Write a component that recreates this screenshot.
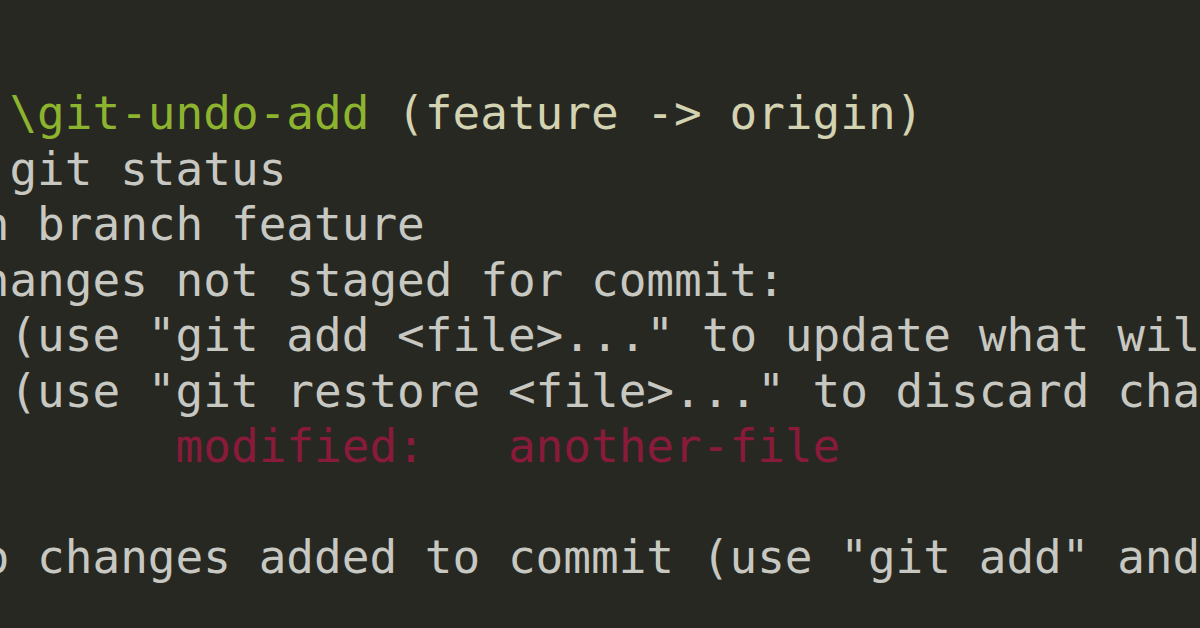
import React from 'react';

interface Segment {
  text: string;
  color: string;
}

const lines: Segment[][] = [
  [
    { text: '  \\git-undo-add', color: 'text-[#8db42e]' },
    { text: ' (feature -> origin)', color: 'text-[#d3d3b2]' }
  ],
  [{ text: 'λ git status', color: 'text-[#c8c8c2]' }],
  [{ text: 'On branch feature', color: 'text-[#c8c8c2]' }],
  [{ text: 'Changes not staged for commit:', color: 'text-[#c8c8c2]' }],
  [{ text: '  (use "git add <file>..." to update what will be committed)', color: 'text-[#c8c8c2]' }],
  [{ text: '  (use "git restore <file>..." to discard changes in working directory)', color: 'text-[#c8c8c2]' }],
  [
    { text: '        ', color: 'text-[#c8c8c2]' },
    { text: 'modified:   another-file', color: 'text-[#8a1a3a]' }
  ],
  [{ text: ' ', color: 'text-[#c8c8c2]' }],
  [{ text: 'no changes added to commit (use "git add" and/or "git commit -a")', color: 'text-[#c8c8c2]' }]
];

const App: React.FC = () => {
  return (
    <div className="w-[1200px] h-[628px] overflow-hidden bg-[#282823]">
      <div className="pt-[86px] -ml-[46px] font-['DejaVu_Sans_Mono',monospace] text-[46px] leading-[55.5px] whitespace-pre">
        {lines.map((line, i) => (
          <div key={i}>
            {line.map((seg, j) => (
              <span key={j} className={seg.color}>
                {seg.text}
              </span>
            ))}
          </div>
        ))}
      </div>
    </div>
  );
};

export default App;
